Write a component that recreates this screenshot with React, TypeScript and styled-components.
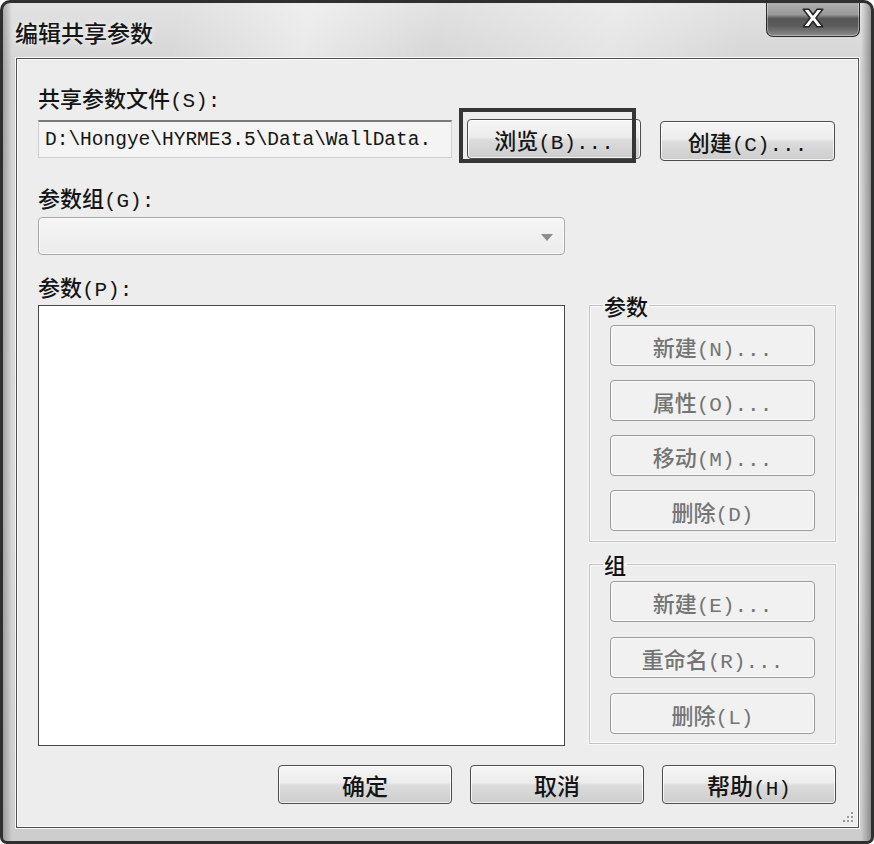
import React from 'react';
import styled, { createGlobalStyle } from 'styled-components';

const GlobalStyle = createGlobalStyle`
  html, body {
    margin: 0;
    padding: 0;
    background: #ffffff;
  }
  body {
    font-family: "Liberation Mono", "Noto Sans CJK SC", monospace;
  }
`;

const Window = styled.div`
  box-sizing: border-box;
  width: 874px;
  height: 844px;
  display: flex;
  flex-direction: column;
  border: 3px solid #2f2f2f;
  border-radius: 10px 10px 7px 7px;
  background:
    linear-gradient(90deg, rgba(60, 60, 60, 0.35) 0px, rgba(255, 255, 255, 0) 9px, rgba(255, 255, 255, 0) 858px, rgba(60, 60, 60, 0.45) 868px),
    linear-gradient(180deg, #e2e2e2 0%, #d4d4d4 8%, #d9d9d9 60%, #cdcdcd 100%);
  overflow: hidden;
`;

const TitleBar = styled.div`
  height: 55px;
  display: flex;
  align-items: flex-start;
  background: linear-gradient(100deg, rgba(255, 255, 255, 0) 20%, rgba(255, 255, 255, 0.45) 35%, rgba(255, 255, 255, 0) 50%, rgba(255, 255, 255, 0.35) 70%, rgba(255, 255, 255, 0) 85%);
`;

const Title = styled.div`
  margin: 17px 0 0 12px;
  font-family: "Noto Sans CJK SC", sans-serif;
  font-size: 23px;
  font-weight: 500;
  line-height: 24px;
  color: #151515;
  text-shadow: 0 0 6px rgba(255, 255, 255, 0.9);
`;

const CloseButton = styled.div`
  box-sizing: border-box;
  margin: -3px 11px 0 auto;
  width: 94px;
  height: 37px;
  display: flex;
  align-items: center;
  justify-content: center;
  border: 1px solid #2a2a2a;
  border-top: none;
  border-radius: 0 0 7px 7px;
  background: linear-gradient(180deg, #b4b4b4 0%, #999999 40%, #555555 52%, #5c5c5c 72%, #8c8c8c 100%);
  box-shadow: inset 0 0 0 1px rgba(255, 255, 255, 0.35);
`;

const Client = styled.div`
  position: relative;
  flex: 1;
  margin: 0 12px 13px 13px;
  padding: 26px 22px 0 21px;
  display: flex;
  flex-direction: column;
  border: 1px solid #4f4f4f;
  background: #ededed;
  box-shadow: 0 0 0 1px #f7f7f7, inset 0 0 0 1px #fbfbfb;
`;

const Label = styled.div<{ $top: number }>`
  margin-top: ${(p) => p.$top}px;
  height: 24px;
  font-size: 21px;
  line-height: 24px;
  color: #141414;
  white-space: nowrap;
`;

const FileRow = styled.div`
  margin-top: 10px;
  height: 40px;
  display: flex;
  align-items: center;
`;

const PathBox = styled.div`
  box-sizing: border-box;
  width: 414px;
  height: 38px;
  padding: 0 0 0 6px;
  display: flex;
  align-items: center;
  overflow: hidden;
  white-space: nowrap;
  font-family: "Liberation Mono", monospace;
  font-size: 19.5px;
  color: #151515;
  background: #f4f4f4;
  border: 1px solid #cfcfcf;
  border-top: 2px solid #7a7a7a;
`;

const FocusWrap = styled.div`
  position: relative;
  margin-left: 15px;
`;

const FocusMark = styled.div`
  position: absolute;
  left: -8px;
  top: -11px;
  width: 177px;
  height: 55px;
  box-sizing: border-box;
  border: 4px solid #363636;
  pointer-events: none;
`;

const Button = styled.div<{ $w: number; $h?: number; $disabled?: boolean }>`
  box-sizing: border-box;
  width: ${(p) => p.$w}px;
  height: ${(p) => p.$h ?? 40}px;
  display: flex;
  align-items: center;
  justify-content: center;
  flex-shrink: 0;
  font-size: 21px;
  white-space: nowrap;
  border-radius: 4px;
  color: ${(p) => (p.$disabled ? '#747474' : '#141414')};
  border: 1px solid ${(p) => (p.$disabled ? '#9a9a9a' : '#4e4e4e')};
  background: ${(p) =>
    p.$disabled
      ? '#f1f1f1'
      : 'linear-gradient(180deg, #f6f6f6 0%, #ececec 45%, #dcdcdc 52%, #cdcdcd 100%)'};
  box-shadow: inset 0 0 0 1px ${(p) => (p.$disabled ? '#fbfbfb' : 'rgba(255,255,255,0.75)')};
`;

const Caption = styled.span`
  display: inline-block;
  height: 26px;
  line-height: 26px;
`;

const CjkText = styled.span<{ $size?: number }>`
  font-family: "Noto Sans CJK SC", sans-serif;
  font-size: ${(p) => p.$size ?? 22}px;
  font-weight: 500;
`;

const CreateSpacer = styled.div`
  margin-left: 19px;
  display: flex;
  align-items: center;
  padding-top: 3px;
`;

const Combo = styled.div`
  box-sizing: border-box;
  margin-top: 8px;
  width: 527px;
  height: 38px;
  display: flex;
  align-items: center;
  justify-content: flex-end;
  padding-right: 11px;
  background: linear-gradient(180deg, #f5f5f5, #ececec);
  border: 1px solid #a9a9a9;
  border-radius: 4px;
  box-shadow: inset 0 0 0 1px #fafafa;
`;

const ComboArrow = styled.span`
  width: 0;
  height: 0;
  border-left: 6px solid transparent;
  border-right: 6px solid transparent;
  border-top: 7px solid #8d8d8d;
  margin-top: 2px;
`;

const MainGrid = styled.div`
  margin-top: 19px;
  display: grid;
  grid-template-columns: 527px 247px;
  column-gap: 24px;
`;

const LeftColumn = styled.div`
  display: flex;
  flex-direction: column;
`;

const ListBox = styled.div`
  margin-top: 7px;
  height: 441px;
  box-sizing: border-box;
  background: #ffffff;
  border: 1px solid #474747;
`;

const RightColumn = styled.div`
  padding-top: 19px;
  display: flex;
  flex-direction: column;
  gap: 10px;
`;

const GroupBox = styled.fieldset<{ $pad: number }>`
  margin: 0;
  padding: 0 0 ${(p) => p.$pad}px 0;
  border: 1px solid #c2c2c2;
  box-shadow: inset 0 0 0 1px #fafafa, 0 0 0 1px #f8f8f8;
  min-width: 0;
`;

const Legend = styled.legend`
  margin-left: 13px;
  padding: 0 1px;
  height: 24px;
  font-family: "Noto Sans CJK SC", sans-serif;
  font-size: 22px;
  font-weight: 500;
  line-height: 24px;
  color: #111111;
`;

const ButtonStack = styled.div<{ $top: number; $gap: number }>`
  margin-top: ${(p) => p.$top}px;
  display: flex;
  flex-direction: column;
  align-items: center;
  gap: ${(p) => p.$gap}px;
`;

const BottomRow = styled.div`
  margin-top: 19px;
  display: flex;
  justify-content: flex-end;
  gap: 18px;
`;

const Grip = styled.svg`
  position: absolute;
  right: 3px;
  bottom: 3px;
`;

function CloseIcon() {
  return (
    <svg width="26" height="22" viewBox="0 0 24 20">
      <path
        d="M3 2 H8.2 L12 7 L15.8 2 H21 L14.7 10 L21 18 H15.8 L12 13 L8.2 18 H3 L9.3 10 Z"
        fill="#ffffff"
        stroke="#262626"
        strokeWidth="1.4"
        strokeLinejoin="round"
      />
    </svg>
  );
}

function SideButton({ cjk, rest, disabled = true }: { cjk: string; rest: string; disabled?: boolean }) {
  return (
    <Button $w={205} $h={41} $disabled={disabled}>
      <Caption>
        <CjkText $size={22}>{cjk}</CjkText>
        {rest}
      </Caption>
    </Button>
  );
}

export default function App() {
  return (
    <>
      <GlobalStyle />
      <Window>
        <TitleBar>
          <Title>编辑共享参数</Title>
          <CloseButton>
            <CloseIcon />
          </CloseButton>
        </TitleBar>
        <Client>
          <Label $top={0}>
            <CjkText $size={22}>共享参数文件</CjkText>(S):
          </Label>
          <FileRow>
            <PathBox>{'D:\\Hongye\\HYRME3.5\\Data\\WallData.'}</PathBox>
            <FocusWrap>
              <Button $w={174}>
                <Caption>
                  <CjkText>浏览</CjkText>(B)...
                </Caption>
              </Button>
              <FocusMark />
            </FocusWrap>
            <CreateSpacer>
              <Button $w={175}>
                <Caption>
                  <CjkText>创建</CjkText>(C)...
                </Caption>
              </Button>
            </CreateSpacer>
          </FileRow>
          <Label $top={26}>
            <CjkText $size={22}>参数组</CjkText>(G):
          </Label>
          <Combo>
            <ComboArrow />
          </Combo>
          <MainGrid>
            <LeftColumn>
              <Label $top={0}>
                <CjkText $size={22}>参数</CjkText>(P):
              </Label>
              <ListBox />
            </LeftColumn>
            <RightColumn>
              <GroupBox $pad={10}>
                <Legend>参数</Legend>
                <ButtonStack $top={8} $gap={14}>
                  <SideButton cjk="新建" rest="(N)..." />
                  <SideButton cjk="属性" rest="(O)..." />
                  <SideButton cjk="移动" rest="(M)..." />
                  <SideButton cjk="删除" rest="(D)" />
                </ButtonStack>
              </GroupBox>
              <GroupBox $pad={9}>
                <Legend>组</Legend>
                <ButtonStack $top={5} $gap={15}>
                  <SideButton cjk="新建" rest="(E)..." />
                  <SideButton cjk="重命名" rest="(R)..." />
                  <SideButton cjk="删除" rest="(L)" />
                </ButtonStack>
              </GroupBox>
            </RightColumn>
          </MainGrid>
          <BottomRow>
            <Button $w={174} $h={39}>
              <Caption>
                <CjkText $size={23}>确定</CjkText>
              </Caption>
            </Button>
            <Button $w={174} $h={39}>
              <Caption>
                <CjkText $size={23}>取消</CjkText>
              </Caption>
            </Button>
            <Button $w={174} $h={39}>
              <Caption>
                <CjkText $size={23}>帮助</CjkText>(H)
              </Caption>
            </Button>
          </BottomRow>
          <Grip width="14" height="14" viewBox="0 0 14 14">
            <g fill="#9a9a9a">
              <rect x="10" y="2" width="2" height="2" />
              <rect x="6" y="6" width="2" height="2" />
              <rect x="10" y="6" width="2" height="2" />
              <rect x="2" y="10" width="2" height="2" />
              <rect x="6" y="10" width="2" height="2" />
              <rect x="10" y="10" width="2" height="2" />
            </g>
          </Grip>
        </Client>
      </Window>
    </>
  );
}
